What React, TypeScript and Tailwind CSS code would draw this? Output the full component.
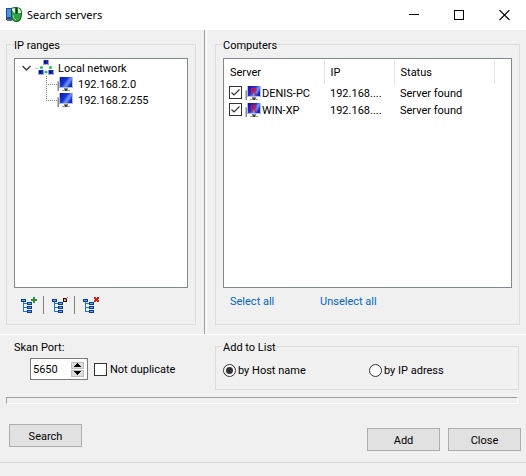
import React, { useState } from 'react';

interface Server {
  name: string;
  ip: string;
  status: string;
  checked: boolean;
}

const ranges = ['192.168.2.0', '192.168.2.255'];

const AppIcon = () => (
  <svg width="16" height="16" viewBox="0 0 16 16" aria-hidden="true">
    <rect x="0" y="1" width="6" height="12" fill="#1b4f9c" />
    <rect x="1" y="2" width="4" height="8" fill="#4b93e0" />
    <rect x="1" y="12" width="5" height="2" fill="#5a6b80" />
    <path d="M5 2 Q5 0 10 0 Q16 0 16 6 Q16 15 10.500 15 Q5 15 5 8 Z" fill="#0c5a1a" />
    <path d="M6 2 Q6 1 10 1 Q15 1 15 6 Q15 14 10.500 14 Q6 14 6 8 Z" fill="#2fa043" />
    <path d="M6 1.500 H9 V6 Q7 5.500 6 3 Z" fill="#f4fff4" />
    <path d="M12 1 Q15 2 15 6 L12 6 Z" fill="#d5f5d8" />
    <path d="M7 8 Q7 12 10 13" stroke="#8fe39a" fill="none" />
    <rect x="9.500" y="1" width="2" height="6" rx="1" fill="#063d10" />
  </svg>
);

const NetworkIcon = () => (
  <svg width="16" height="16" viewBox="0 0 16 16" aria-hidden="true">
    {[[5, 0], [0, 10], [10, 10]].map(([x, y]) => (
      <g key={`${x}-${y}`} shapeRendering="crispEdges">
        <rect x={x} y={y} width="6" height="4" fill="#8f9fd0" />
        <rect x={x + 1} y={y} width="4" height="4" fill="#1428c8" />
        <rect x={x + 1} y={y + 1} width="2" height="2" fill="#0a0f78" />
        <rect x={x} y={y + 4} width="6" height="1" fill="#b0b0b0" />
      </g>
    ))}
    <circle cx="3.500" cy="7.500" r="1.600" fill="#1fc45a" />
    <circle cx="12.500" cy="7.500" r="1.600" fill="#1fc45a" />
    <circle cx="8" cy="12" r="1.600" fill="#1fc45a" />
  </svg>
);

const ComputerIcon = ({ radmin = false }: { radmin?: boolean }) => (
  <svg width="16" height="16" viewBox="0 0 16 16" className="shrink-0" aria-hidden="true">
    <defs>
      <linearGradient id="screen" x1="0" y1="0" x2="1" y2="0.6">
        <stop offset="0" stopColor="#0a14a8" />
        <stop offset="0.5" stopColor="#1a35d8" />
        <stop offset="0.75" stopColor="#6f9cf8" />
        <stop offset="1" stopColor="#1426c4" />
      </linearGradient>
    </defs>
    <rect x="0" y="5" width="2" height="10" fill="#c4c4c4" />
    <rect x="1" y="6" width="1" height="9" fill="#8a8a8a" />
    <rect x="2" y="1" width="14" height="11" fill="#b4bce0" />
    <rect x="3" y="1" width="12" height="10" fill="url(#screen)" />
    <rect x="7" y="12" width="4" height="2" fill="#8a8a8a" />
    <rect x="5" y="14" width="8" height="1" fill="#a0a0a0" />
    <rect x="8" y="13" width="2" height="2" fill="#404040" />
    {radmin && (
      <path d="M6.500 10 V3.500 H9.500 Q11 3.500 11 5 Q11 6.500 9.500 6.500 H7 M9 6.500 L11 10" fill="none" stroke="#e0103c" strokeWidth="1.300" />
    )}
  </svg>
);

const ToolIcon = ({ kind }: { kind: 'add' | 'edit' | 'delete' }) => (
  <svg width="17" height="17" viewBox="0 0 17 17" shapeRendering="crispEdges" className="max-w-none" aria-hidden="true">
    <path d="M2.500 5 V15 M3 6.500 H6 M3 10.500 H6 M3 14.500 H6" stroke="#1e78d2" fill="none" />
    {[[0, 2], [6, 5], [6, 9], [6, 13]].map(([x, y]) => (
      <g key={`${x}-${y}`}>
        <rect x={x} y={y} width="5" height="3" fill="#0a3a9c" />
        <rect x={x + 1} y={y + 1} width="3" height="1" fill="#62a8f0" />
      </g>
    ))}
    {kind === 'add' && <path d="M12 0 H14 V2 H16 V4 H14 V6 H12 V4 H10 V2 H12 Z" fill="#2f8a34" />}
    {kind === 'edit' && (
      <>
        <rect x="11" y="1" width="4" height="4" fill="#101010" />
        <rect x="12" y="2" width="2" height="2" fill="#f0c0a0" />
        <path d="M13 2 H14 V1 H15 V0 H16 V1 H15 V2 H14 V3 H13 Z" fill="#e0501c" />
      </>
    )}
    {kind === 'delete' && (
      <path d="M11 0 H13 V1 H14 V0 H16 V2 H15 V3 H16 V5 H14 V4 H13 V5 H11 V3 H12 V2 H11 Z" fill="#dc1c0c" />
    )}
  </svg>
);

const Checkbox = (props: React.InputHTMLAttributes<HTMLInputElement>) => (
  <span className="grid size-[13px] shrink-0">
    <input
      type="checkbox"
      {...props}
      className="peer col-start-1 row-start-1 size-[13px] appearance-none border border-[#333333] bg-white"
    />
    <svg
      viewBox="0 0 13 13"
      className="pointer-events-none col-start-1 row-start-1 size-[13px] opacity-0 peer-checked:opacity-100"
      aria-hidden="true"
    >
      <path d="M2.500 6.500 L5 9 L10.500 3.500" fill="none" stroke="#333333" strokeWidth="1.200" />
    </svg>
  </span>
);

const radioClass =
  'grid size-[13px] appearance-none place-items-center rounded-full border border-[#333333] bg-white checked:before:size-[7px] checked:before:rounded-full checked:before:bg-[#333333]';
const buttonClass = 'h-[23px] w-[73px] border border-[#adadad] bg-[#e1e1e1] pt-px text-center';
const groupClass = 'border border-[#dcdcdc] px-[7px]';
const legendClass = 'pt-0.5';
const captionButtonClass = 'grid h-[30px] w-[45px] place-items-center';

const App = () => {
  const [port, setPort] = useState(5650);
  const [notDuplicate, setNotDuplicate] = useState(false);
  const [addBy, setAddBy] = useState('host');
  const [servers, setServers] = useState<Server[]>([
    { name: 'DENIS-PC', ip: '192.168....', status: 'Server found', checked: true },
    { name: 'WIN-XP', ip: '192.168....', status: 'Server found', checked: true },
  ]);

  const setAll = (checked: boolean) => (e: React.MouseEvent) => {
    e.preventDefault();
    setServers((prev) => prev.map((s) => ({ ...s, checked })));
  };

  const toggle = (name: string) => {
    setServers((prev) => prev.map((s) => (s.name === name ? { ...s, checked: !s.checked } : s)));
  };

  return (
    <div className="min-h-screen bg-[#f0f0f0] font-[Roboto,sans-serif] text-[11px] leading-[15px] text-black">
      <header className="flex h-[30px] items-center bg-white pl-1.5">
        <AppIcon />
        <h1 className="grow pb-px pl-[5px] font-['Noto_Sans',sans-serif]">Search servers</h1>
        <div className="flex">
          <button type="button" aria-label="Minimize" className={captionButtonClass}>
            <svg width="11" height="11" shapeRendering="crispEdges" aria-hidden="true">
              <path d="M1 4.500 H11" stroke="#000" />
            </svg>
          </button>
          <button type="button" aria-label="Maximize" className={captionButtonClass}>
            <svg width="11" height="11" shapeRendering="crispEdges" aria-hidden="true">
              <rect x="1.500" y="0.500" width="9" height="9" fill="none" stroke="#000" />
            </svg>
          </button>
          <button type="button" aria-label="Close window" className={captionButtonClass}>
            <svg width="13" height="11" aria-hidden="true">
              <path d="M2.500 0 L12.500 10 M12.500 0 L2.500 10" stroke="#000" strokeWidth="1.100" />
            </svg>
          </button>
        </div>
      </header>

      <main>
        <div className="flex gap-px border-b border-white">
          <section className="w-[205px] shrink-0 border-r border-[#a0a0a0] pt-1.5 pr-2 pb-[9px] pl-1.5">
            <fieldset className={groupClass}>
              <legend className={legendClass}>IP ranges</legend>
              <div className="mt-[5px] h-[230px] border border-[#828790] bg-white pt-px pl-[7px]">
                <ul>
                  <li>
                    <div className="flex h-4 items-center">
                      <svg width="16" height="16" aria-hidden="true">
                        <path d="M0.500 6 L4.500 10 L8.500 6" fill="none" stroke="#404040" strokeWidth="1.500" />
                        <path d="M13.500 8.500 H16" stroke="#808080" strokeDasharray="1 1" />
                      </svg>
                      <NetworkIcon />
                      <span className="pl-1">Local network</span>
                    </div>
                    <ul className="pl-6">
                      {ranges.map((range, i) => (
                        <li key={range} className="flex h-4 items-center">
                          <svg width="11" height="16" shapeRendering="crispEdges" aria-hidden="true">
                            <path
                              d={i === ranges.length - 1 ? 'M0.500 0 V9 M2 8.500 H11' : 'M0.500 0 V16 M2 8.500 H11'}
                              fill="none"
                              stroke="#808080"
                              strokeDasharray="1 1"
                            />
                          </svg>
                          <ComputerIcon />
                          <span className="pl-[5px]">{range}</span>
                        </li>
                      ))}
                    </ul>
                  </li>
                </ul>
              </div>
              <div className="flex h-9 items-center pb-0.5 pl-[7px]">
                <button type="button" aria-label="Add range" className="w-4">
                  <ToolIcon kind="add" />
                </button>
                <span className="mr-2 ml-1.5 h-[18px] w-px bg-[#808080]" />
                <button type="button" aria-label="Edit range" className="w-4">
                  <ToolIcon kind="edit" />
                </button>
                <span className="mr-2 ml-1.5 h-[18px] w-px bg-[#808080]" />
                <button type="button" aria-label="Delete range" className="w-4">
                  <ToolIcon kind="delete" />
                </button>
              </div>
            </fieldset>
          </section>

          <section className="grow border-l border-white pt-1.5 pr-1.5 pb-[9px] pl-2">
            <fieldset className={groupClass}>
              <legend className={legendClass}>Computers</legend>
              <div className="mt-[5px] h-[230px] border border-[#828790] bg-white pt-px">
                <table className="w-full table-fixed text-left">
                  <thead>
                    <tr className="h-6">
                      <th className="w-[100px] border-r border-[#e5e5e5] p-0 pl-1.5 font-normal">Server</th>
                      <th className="w-[70px] border-r border-[#e5e5e5] p-0 pl-1.5 font-normal">IP</th>
                      <th className="w-[100px] border-r border-[#e5e5e5] p-0 pl-1.5 font-normal">Status</th>
                      <td />
                    </tr>
                  </thead>
                  <tbody>
                    {servers.map((server) => (
                      <tr key={server.name} className="h-[17px]">
                        <td className="p-0 pl-[5px]">
                          <label className="flex h-[17px] items-center">
                            <Checkbox checked={server.checked} onChange={() => toggle(server.name)} />
                            <span className="flex items-center gap-px pl-[3px]">
                              <ComputerIcon radmin />
                              <span className="pt-px">{server.name}</span>
                            </span>
                          </label>
                        </td>
                        <td className="p-0 pt-px pl-1.5">{server.ip}</td>
                        <td className="p-0 pt-px pl-1.5">{server.status}</td>
                        <td />
                      </tr>
                    ))}
                  </tbody>
                </table>
              </div>
              <div className="flex h-9 pt-1.5 pl-[7px] text-[#0066cc]">
                <a href="#select" onClick={setAll(true)} className="w-[90px]">
                  Select all
                </a>
                <a href="#unselect" onClick={setAll(false)}>
                  Unselect all
                </a>
              </div>
            </fieldset>
          </section>
        </div>

        <div className="flex pt-[3px] pr-[7px]">
          <div className="w-[215px] shrink-0 pl-3.5">
            <label htmlFor="port" className="block pt-0.5">
              Skan Port:
            </label>
            <div className="flex items-center gap-1.5 pt-[3px] pl-4">
              <div className="flex h-[22px] w-[58px] items-center border border-[#7a7a7a] bg-white pr-[3px]">
                <input
                  id="port"
                  type="text"
                  value={port}
                  onChange={(e) => setPort(Number(e.target.value) || 0)}
                  className="w-0 grow pl-0.5 outline-none"
                />
                <div className="grid w-[13px] gap-px">
                  <button
                    type="button"
                    aria-label="Increase"
                    onClick={() => setPort(port + 1)}
                    className="grid h-[7px] place-items-center border border-[#c0c0c0] bg-[#dddddd]"
                  >
                    <svg width="7" height="4" shapeRendering="crispEdges" aria-hidden="true">
                      <path d="M3 0 H4 V1 H5 V2 H6 V3 H7 V4 H0 V3 H1 V2 H2 V1 H3 Z" />
                    </svg>
                  </button>
                  <button
                    type="button"
                    aria-label="Decrease"
                    onClick={() => setPort(port - 1)}
                    className="grid h-[7px] place-items-center border border-[#c0c0c0] bg-[#dddddd]"
                  >
                    <svg width="7" height="4" shapeRendering="crispEdges" aria-hidden="true">
                      <path d="M0 0 H7 V1 H6 V2 H5 V3 H4 V4 H3 V3 H2 V2 H1 V1 H0 Z" />
                    </svg>
                  </button>
                </div>
              </div>
              <label className="flex items-center gap-[3px]">
                <Checkbox checked={notDuplicate} onChange={(e) => setNotDuplicate(e.target.checked)} />
                <span className="pt-px">Not duplicate</span>
              </label>
            </div>
          </div>

          <fieldset className={`${groupClass} grow`}>
            <legend className={legendClass}>Add to List</legend>
            <div className="flex h-[34px] pt-[7px]">
              <label className="flex h-4 w-[146px] items-center gap-0.5">
                <input
                  type="radio"
                  name="addBy"
                  checked={addBy === 'host'}
                  onChange={() => setAddBy('host')}
                  className={radioClass}
                />
                <span className="pt-px">by Host name</span>
              </label>
              <label className="flex h-4 items-center gap-0.5">
                <input
                  type="radio"
                  name="addBy"
                  checked={addBy === 'ip'}
                  onChange={() => setAddBy('ip')}
                  className={radioClass}
                />
                <span className="pt-px">by IP adress</span>
              </label>
            </div>
          </fieldset>
        </div>

        <div
          role="progressbar"
          aria-label="Search progress"
          className="mt-[7px] mr-2 ml-1.5 h-[7px] border border-t-[#a0a0a0] border-r-white border-b-white border-l-[#a0a0a0]"
        />

        <div className="flex border-b border-[#d7d7d7] pt-5 pr-[5px] pb-[11px] pl-[9px]">
          <button type="button" className={buttonClass}>
            Search
          </button>
          <div className="flex grow justify-end gap-2 pt-1">
            <button type="button" className={buttonClass}>
              Add
            </button>
            <button type="button" className={buttonClass}>
              Close
            </button>
          </div>
        </div>
      </main>
    </div>
  );
};

export default App;
